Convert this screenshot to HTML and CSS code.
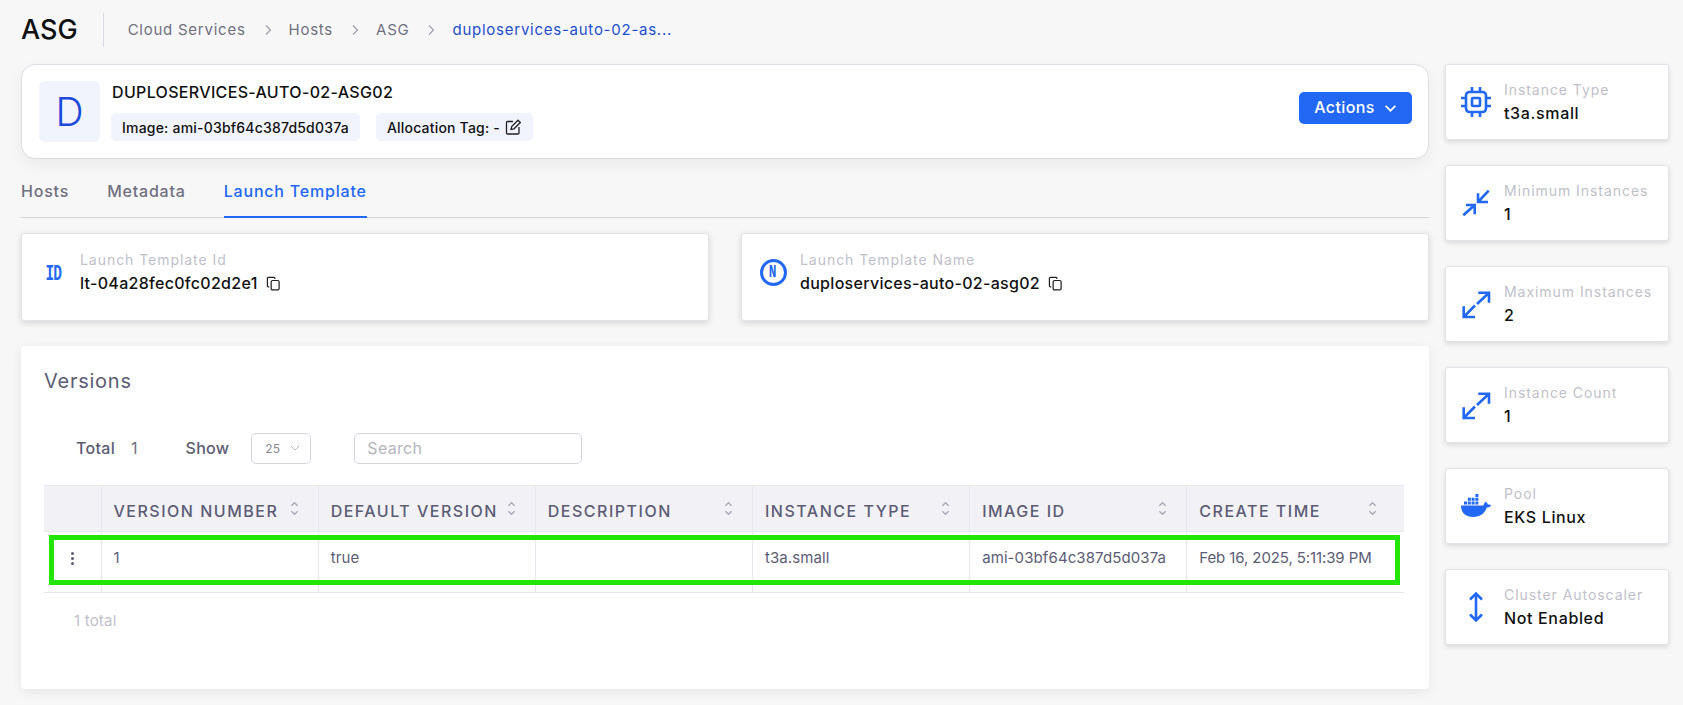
FILE: index.html
```html
<!DOCTYPE html>
<html lang="en">
<head>
    <meta charset="UTF-8">
    <meta name="viewport" content="width=device-width, initial-scale=1.0">
    <title>ASG</title>
    <link rel="stylesheet" href="styles.css">
</head>
<body>
    <div class="page">
        <div class="main">
            <header class="topbar">
                <h1 class="pagetitle">ASG</h1>
                <nav class="crumbs">
                    <span>Cloud Services</span>
                    <svg class="crumbsep" viewBox="0 0 8 12"><path d="M2 1.5 6.5 6 2 10.5"/></svg>
                    <span>Hosts</span>
                    <svg class="crumbsep" viewBox="0 0 8 12"><path d="M2 1.5 6.5 6 2 10.5"/></svg>
                    <span>ASG</span>
                    <svg class="crumbsep" viewBox="0 0 8 12"><path d="M2 1.5 6.5 6 2 10.5"/></svg>
                    <span class="crumbcurrent">duploservices-auto-02-as...</span>
                </nav>
            </header>

            <section class="summary">
                <div class="avatar">D</div>
                <div class="summaryinfo">
                    <div class="summaryname">DUPLOSERVICES-AUTO-02-ASG02</div>
                    <div class="chips">
                        <span class="chip">Image: ami-03bf64c387d5d037a</span>
                        <span class="chip"><span>Allocation Tag: -</span><svg class="editicon" viewBox="0 0 16 16"><path d="M8 2.500H2.500a1 1 0 0 0-1 1V14a1 1 0 0 0 1 1H13a1 1 0 0 0 1-1V8"/><path d="M6 10.500 6.700 7.500 13 1.200 15.300 3.500 9 9.800Z"/></svg></span>
                    </div>
                </div>
                <button class="actions">Actions
                    <svg viewBox="0 0 12 8"><path d="M1.500 1.500 6 6l4.500-4.500"/></svg>
                </button>
            </section>

            <div class="tabs">
                <div class="tab">Hosts</div>
                <div class="tab">Metadata</div>
                <div class="tab tabactive">Launch Template</div>
            </div>

            <div class="infocards">
                <div class="infocard">
                    <div class="iconslot"><span class="idicon">ID</span></div>
                    <div>
                        <div class="label">Launch Template Id</div>
                        <div class="infovalue">lt-04a28fec0fc02d2e1
                            <svg class="copyicon" viewBox="0 0 16 16"><path d="M3.500 11.500H2.500a1 1 0 0 1-1-1V2.500a1 1 0 0 1 1-1h6a1 1 0 0 1 1 1v.8"/><rect x="5.500" y="4.800" width="8.500" height="10" rx="1.500"/></svg>
                        </div>
                    </div>
                </div>
                <div class="infocard">
                    <div class="iconslot"><span class="nameicon"><span>N</span></span></div>
                    <div>
                        <div class="label">Launch Template Name</div>
                        <div class="infovalue">duploservices-auto-02-asg02
                            <svg class="copyicon" viewBox="0 0 16 16"><path d="M3.500 11.500H2.500a1 1 0 0 1-1-1V2.500a1 1 0 0 1 1-1h6a1 1 0 0 1 1 1v.8"/><rect x="5.500" y="4.800" width="8.500" height="10" rx="1.500"/></svg>
                        </div>
                    </div>
                </div>
            </div>

            <section class="versions">
                <h2 class="versionstitle">Versions</h2>
                <div class="filters">
                    <span class="filterlabel">Total</span>
                    <span class="filtercount">1</span>
                    <span class="filterlabel showlabel">Show</span>
                    <div class="pagesize">25
                        <svg viewBox="0 0 10 6"><path d="M1 1l4 4 4-4"/></svg>
                    </div>
                    <div class="search">Search</div>
                </div>
                <div class="tablewrap">
                    <table class="grid">
                        <thead>
                            <tr>
                                <th class="menucol"></th>
                                <th><div class="thcell">VERSION NUMBER <svg class="sort" viewBox="0 0 10 16"><path d="M1.500 5 5 1.500 8.500 5M1.500 11 5 14.500 8.500 11"/></svg></div></th>
                                <th><div class="thcell">DEFAULT VERSION <svg class="sort" viewBox="0 0 10 16"><path d="M1.500 5 5 1.500 8.500 5M1.500 11 5 14.500 8.500 11"/></svg></div></th>
                                <th><div class="thcell">DESCRIPTION <svg class="sort" viewBox="0 0 10 16"><path d="M1.500 5 5 1.500 8.500 5M1.500 11 5 14.500 8.500 11"/></svg></div></th>
                                <th><div class="thcell">INSTANCE TYPE <svg class="sort" viewBox="0 0 10 16"><path d="M1.500 5 5 1.500 8.500 5M1.500 11 5 14.500 8.500 11"/></svg></div></th>
                                <th><div class="thcell">IMAGE ID <svg class="sort" viewBox="0 0 10 16"><path d="M1.500 5 5 1.500 8.500 5M1.500 11 5 14.500 8.500 11"/></svg></div></th>
                                <th><div class="thcell">CREATE TIME <svg class="sort" viewBox="0 0 10 16"><path d="M1.500 5 5 1.500 8.500 5M1.500 11 5 14.500 8.500 11"/></svg></div></th>
                            </tr>
                        </thead>
                        <tbody>
                            <tr>
                                <td class="menucol"><span class="dots"><i></i><i></i><i></i></span></td>
                                <td>1</td>
                                <td>true</td>
                                <td></td>
                                <td>t3a.small</td>
                                <td>ami-03bf64c387d5d037a</td>
                                <td class="timecell">Feb 16, 2025, 5:11:39 PM</td>
                            </tr>
                        </tbody>
                    </table>
                    <div class="highlight"></div>
                </div>
                <div class="tablefoot">1 total</div>
            </section>
        </div>

        <aside class="side">
            <div class="statcard">
                <svg class="staticon" viewBox="0 0 32 32"><rect x="6" y="6" width="20" height="20" rx="3.500"/><rect x="12" y="12" width="8" height="8" rx="1"/><path d="M12 6V1M20 6V1M12 31V26M20 31V26M6 12H1M6 20H1M31 12H26M31 20H26"/></svg>
                <div class="stattext"><div class="label">Instance Type</div><div class="statvalue">t3a.small</div></div>
            </div>
            <div class="statcard">
                <svg class="staticon" viewBox="0 0 32 32"><path d="M18 6.300V15H28M18 15 28.700 3.700M6 18H14.700V27.300M14.700 18 3.300 28.300"/></svg>
                <div class="stattext"><div class="label">Minimum Instances</div><div class="statvalue">1</div></div>
            </div>
            <div class="statcard">
                <svg class="staticon" viewBox="0 0 32 32"><path d="M18.300 4.700H29V14.700M29 4.700 17 16M3.700 18.300V29H15M3.700 29 15 17.500"/></svg>
                <div class="stattext"><div class="label">Maximum Instances</div><div class="statvalue">2</div></div>
            </div>
            <div class="statcard">
                <svg class="staticon" viewBox="0 0 32 32"><path d="M18.300 4.700H29V14.700M29 4.700 17 16M3.700 18.300V29H15M3.700 29 15 17.500"/></svg>
                <div class="stattext"><div class="label">Instance Count</div><div class="statvalue">1</div></div>
            </div>
            <div class="statcard">
                <svg class="staticon docker" viewBox="0 0 32 24"><path d="M1 11.500h22.500c.3-1.800 1.300-3 2.500-3.700 1 .8 1.600 1.700 1.800 2.800 1.200-.3 2.400-.1 3.200.6-.7 1.600-2.200 2.400-4.300 2.400C25 19 20.500 23 13 23 5 23 1.200 18.500 1 11.500Z"/><path d="M4 7.500h3v3H4zM7.800 7.500h3v3h-3zM11.600 7.500h3v3h-3zM15.400 7.500h3v3h-3zM7.800 3.800h3v3h-3zM11.600 3.800h3v3h-3zM15.400 3.800h3v3h-3zM15.400 0h3v3h-3z"/></svg>
                <div class="stattext"><div class="label">Pool</div><div class="statvalue">EKS Linux</div></div>
            </div>
            <div class="statcard">
                <svg class="staticon" viewBox="0 0 32 32"><path d="M16 2.500v27M10 8.500l6-6 6 6M10 23.500l6 6 6-6"/></svg>
                <div class="stattext"><div class="label">Cluster Autoscaler</div><div class="statvalue">Not Enabled</div></div>
            </div>
        </aside>
    </div>
</body>
</html>
```

FILE: styles.css
```css
body {
    margin: 0;
    height: 705px;
    overflow: hidden;
    background-color: #f7f7f8;
    font-family: Inter, "Noto Sans", sans-serif;
    color: #111;
}

.page {
    display: flex;
    gap: 16px;
    padding-left: 21px;
}

.main {
    width: 1408px;
}

.topbar {
    display: flex;
    align-items: center;
    height: 64px;
    padding-bottom: 5px;
    box-sizing: border-box;
}

.pagetitle {
    margin: 0;
    padding-right: 25px;
    font-size: 27px;
    font-weight: 500;
    line-height: 34px;
    border-right: 1px solid #d9dae3;
}

.crumbs {
    display: flex;
    align-items: center;
    padding-left: 24px;
    font-size: 15px;
    letter-spacing: 0.75px;
    color: #70707f;
}

.crumbsep {
    width: 8px;
    height: 12px;
    margin: 0 17px 0 18px;
    fill: none;
    stroke: #a0a0ad;
    stroke-width: 1.200;
}

.crumbcurrent {
    color: #1f4fcc;
}

.summary {
    display: flex;
    align-items: flex-start;
    height: 95px;
    box-sizing: border-box;
    padding: 16px 16px 0 17px;
    background-color: #fff;
    border: 1px solid #dcdde3;
    border-radius: 14px;
    box-shadow: 0 6px 16px rgba(0, 0, 0, 0.05);
}

.avatar {
    width: 61px;
    height: 61px;
    margin-right: 11px;
    border-radius: 6px;
    background-color: #f1f3fd;
    color: #1d48d8;
    font-size: 39px;
    font-weight: 300;
    line-height: 61px;
    text-align: center;
}

.summaryinfo {
    flex: 1;
}

.summaryname {
    margin: 1px 0 11px 1px;
    font-size: 16px;
    font-weight: 500;
    line-height: 20px;
    letter-spacing: 0.33px;
}

.chips {
    display: flex;
    gap: 16px;
}

.chip {
    display: flex;
    align-items: center;
    gap: 5px;
    height: 28px;
    padding: 0 11px;
    border-radius: 5px;
    background-color: #f1f3fd;
    font-size: 14px;
    font-weight: 500;
    letter-spacing: 0.2px;
    white-space: nowrap;
}

.editicon {
    width: 16px;
    height: 16px;
    margin-right: 1px;
    fill: none;
    stroke: #222;
    stroke-width: 1.300;
}

.actions {
    display: flex;
    align-items: center;
    justify-content: center;
    gap: 9px;
    width: 113px;
    height: 32px;
    margin-top: 11px;
    padding: 0 0 2px;
    border: none;
    border-radius: 5px;
    background-color: #2268f5;
    color: #fff;
    font-family: inherit;
    font-size: 16px;
    font-weight: 500;
    letter-spacing: 0.4px;
}

.actions svg {
    width: 13px;
    height: 9px;
    margin-top: 3px;
    fill: none;
    stroke: #fff;
    stroke-width: 1.600;
}

.tabs {
    display: flex;
    gap: 38px;
    height: 59px;
    box-sizing: border-box;
    border-bottom: 1px solid #d4d5da;
}

.tab {
    padding-top: 21px;
    margin-bottom: -1px;
    font-size: 16px;
    font-weight: 500;
    line-height: 22px;
    letter-spacing: 0.8px;
    color: #70707f;
}

.tabactive {
    color: #2268f5;
    border-bottom: 2px solid #2268f5;
}

.infocards {
    display: flex;
    gap: 32px;
    margin-top: 15px;
}

.infocard {
    display: flex;
    flex: 1;
    align-items: flex-start;
    gap: 12px;
    height: 88px;
    box-sizing: border-box;
    padding: 16px 0 0 16px;
    background-color: #fff;
    border: 1px solid #e2e3e8;
    border-radius: 3px;
    box-shadow: 0 2px 6px rgba(0, 0, 0, 0.14);
}

.iconslot {
    display: flex;
    align-items: center;
    justify-content: center;
    width: 30px;
    height: 27px;
    margin-top: 9px;
}

.idicon {
    color: #2268f5;
    font-family: "Liberation Mono", monospace;
    font-size: 17px;
    font-weight: 700;
    line-height: 20px;
    letter-spacing: -1px;
    transform: translateY(2px) scale(0.85, 1.35);
}

.nameicon {
    display: flex;
    align-items: center;
    justify-content: center;
    width: 21px;
    height: 21px;
    border: 3px solid #2268f5;
    border-radius: 50%;
    color: #2268f5;
    font-family: "Liberation Mono", monospace;
    font-size: 15px;
    font-weight: 700;
}

.nameicon span {
    transform: scale(0.85, 1.2);
}

.label {
    font-size: 14px;
    line-height: 20px;
    letter-spacing: 0.95px;
    color: #bfbfcb;
}

.infovalue {
    display: flex;
    align-items: center;
    gap: 8px;
    margin-top: 2px;
    font-size: 16px;
    font-weight: 500;
    line-height: 22px;
    letter-spacing: 0.3px;
}

.copyicon {
    width: 15px;
    height: 15px;
    fill: none;
    stroke: #222;
    stroke-width: 1.300;
}

.versions {
    height: 343px;
    margin-top: 25px;
    box-sizing: border-box;
    padding: 22px 23px 0 23px;
    background-color: #fff;
    border-radius: 4px;
    box-shadow: 0 3px 12px rgba(0, 0, 0, 0.07);
}

.versionstitle {
    margin: 0;
    font-size: 20px;
    font-weight: 400;
    line-height: 26px;
    letter-spacing: 0.75px;
    color: #5c5c75;
}

.filters {
    display: flex;
    align-items: center;
    height: 32px;
    margin-top: 38px;
    padding-left: 32px;
    font-size: 16px;
    color: #5c5c75;
}

.filterlabel {
    font-weight: 500;
    letter-spacing: 0.3px;
}

.filtercount {
    margin-left: 16px;
    color: #70707f;
}

.showlabel {
    margin-left: 48px;
}

.pagesize {
    display: flex;
    align-items: center;
    justify-content: space-between;
    width: 60px;
    height: 31px;
    margin-left: 22px;
    box-sizing: border-box;
    padding: 0 10px 0 13px;
    border: 1px solid #d4d5dc;
    border-radius: 5px;
    font-size: 12px;
    color: #8b8b98;
}

.pagesize svg {
    width: 10px;
    height: 6px;
    fill: none;
    stroke: #b5b5c0;
}

.search {
    width: 228px;
    height: 31px;
    margin-left: 43px;
    box-sizing: border-box;
    padding-left: 12px;
    border: 1px solid #d4d5dc;
    border-radius: 5px;
    font-size: 16px;
    line-height: 29px;
    letter-spacing: 0.3px;
    color: #b5b5c0;
}

.tablewrap {
    position: relative;
    margin-top: 21px;
}

.grid {
    width: 1360px;
    table-layout: fixed;
    border-collapse: collapse;
    border-bottom: 1px solid #e7e7ef;
}

.grid th,
.grid td {
    border-right: 1px solid #e7e7ef;
    box-sizing: border-box;
    padding: 0 12px;
    text-align: left;
    overflow: hidden;
    white-space: nowrap;
}

.grid th:last-child,
.grid td:last-child {
    border-right: none;
}

.grid th {
    height: 46px;
    padding-top: 4px;
    background-color: #f1f1f6;
    border-top: 1px solid #e7e7ef;
    border-bottom: 1px solid #e7e7ef;
    font-size: 16px;
    font-weight: 500;
    letter-spacing: 1.5px;
    color: #5c5c75;
}

.grid td {
    height: 61px;
    padding-bottom: 9px;
    font-size: 15px;
    letter-spacing: 0.1px;
    color: #5c5c75;
}

.grid td.timecell {
    letter-spacing: -0.1px;
}

.grid .menucol {
    width: 57px;
    padding: 0;
    text-align: center;
}

.grid td.menucol {
    padding-bottom: 9px;
}

.thcell {
    display: flex;
    align-items: center;
    justify-content: space-between;
    padding-right: 7px;
}

.grid th:last-child .thcell {
    padding-right: 15px;
}

.sort {
    flex: none;
    width: 9px;
    height: 15px;
    margin-bottom: 5px;
    fill: none;
    stroke: #a9a9b8;
    stroke-width: 1.500;
}

.dots {
    display: inline-flex;
    flex-direction: column;
    gap: 2px;
    vertical-align: middle;
}

.dots i {
    width: 3px;
    height: 3px;
    border-radius: 50%;
    background-color: #5c5c75;
}

.highlight {
    position: absolute;
    left: 5px;
    top: 50px;
    width: 1351px;
    height: 50px;
    box-sizing: border-box;
    border: 5px solid #22e600;
}

.tablefoot {
    margin-top: 18px;
    padding-left: 30px;
    font-size: 15px;
    line-height: 20px;
    letter-spacing: 0.2px;
    color: #bfbfcb;
}

.side {
    display: flex;
    flex-direction: column;
    gap: 25px;
    width: 224px;
    padding-top: 64px;
}

.statcard {
    display: flex;
    align-items: center;
    gap: 12px;
    height: 76px;
    box-sizing: border-box;
    padding-left: 14px;
    background-color: #fff;
    border: 1px solid #e2e3e8;
    border-radius: 3px;
    box-shadow: 0 2px 5px rgba(0, 0, 0, 0.12);
}

.stattext {
    padding-bottom: 2px;
}

.staticon {
    flex: none;
    width: 32px;
    height: 32px;
    fill: none;
    stroke: #2268f5;
    stroke-width: 2.600;
}

.docker {
    fill: #2268f5;
    stroke: none;
    height: 24px;
}

.statvalue {
    margin-top: 3px;
    font-size: 16px;
    font-weight: 500;
    line-height: 20px;
    letter-spacing: 0.65px;
}
```
